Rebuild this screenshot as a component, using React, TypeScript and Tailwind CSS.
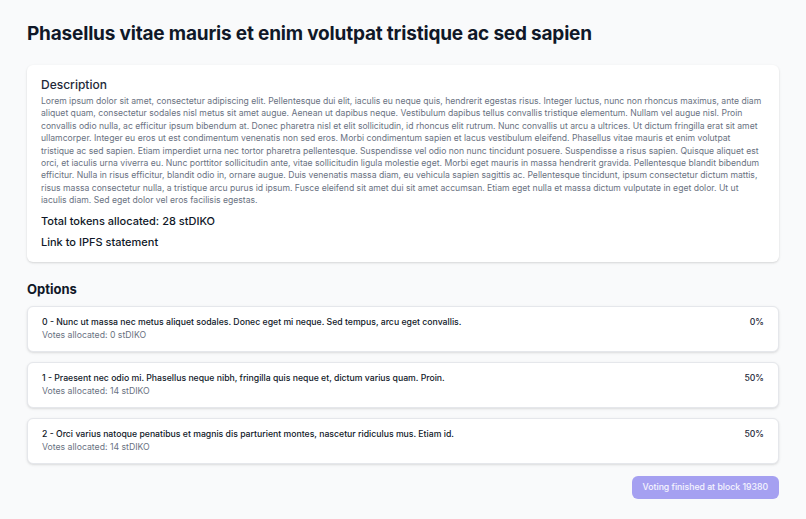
import React from "react";

// line breaks follow the original layout
const descriptionLines = [
  "Lorem ipsum dolor sit amet, consectetur adipiscing elit. Pellentesque dui elit, iaculis eu neque quis, hendrerit egestas risus. Integer luctus, nunc non rhoncus maximus, ante diam",
  "aliquet quam, consectetur sodales nisl metus sit amet augue. Aenean ut dapibus neque. Vestibulum dapibus tellus convallis tristique elementum. Nullam vel augue nisl. Proin",
  "convallis odio nulla, ac efficitur ipsum bibendum at. Donec pharetra nisl et elit sollicitudin, id rhoncus elit rutrum. Nunc convallis ut arcu a ultrices. Ut dictum fringilla erat sit amet",
  "ullamcorper. Integer eu eros ut est condimentum venenatis non sed eros. Morbi condimentum sapien et lacus vestibulum eleifend. Phasellus vitae mauris et enim volutpat",
  "tristique ac sed sapien. Etiam imperdiet urna nec tortor pharetra pellentesque. Suspendisse vel odio non nunc tincidunt posuere. Suspendisse a risus sapien. Quisque aliquet est",
  "orci, et iaculis urna viverra eu. Nunc porttitor sollicitudin ante, vitae sollicitudin ligula molestie eget. Morbi eget mauris in massa hendrerit gravida. Pellentesque blandit bibendum",
  "efficitur. Nulla in risus efficitur, blandit odio in, ornare augue. Duis venenatis massa diam, eu vehicula sapien sagittis ac. Pellentesque tincidunt, ipsum consectetur dictum mattis,",
  "risus massa consectetur nulla, a tristique arcu purus id ipsum. Fusce eleifend sit amet dui sit amet accumsan. Etiam eget nulla et massa dictum vulputate in eget dolor. Ut ut",
  "iaculis diam. Sed eget dolor vel eros facilisis egestas.",
];

const options = [
  {
    label: "0 - Nunc ut massa nec metus aliquet sodales. Donec eget mi neque. Sed tempus, arcu eget convallis.",
    votes: "0 stDIKO",
    pct: "0%",
  },
  {
    label: "1 - Praesent nec odio mi. Phasellus neque nibh, fringilla quis neque et, dictum varius quam. Proin.",
    votes: "14 stDIKO",
    pct: "50%",
  },
  {
    label: "2 - Orci varius natoque penatibus et magnis dis parturient montes, nascetur ridiculus mus. Etiam id.",
    votes: "14 stDIKO",
    pct: "50%",
  },
];

export default function App() {
  return (
    <div className="min-h-[519px] w-full bg-gray-50 px-[27px] pt-[22px] pb-5 font-['Inter',sans-serif] text-gray-900">
      <h1 className="text-[19px] font-bold leading-[24px] tracking-[-0.01em]">
        Phasellus vitae mauris et enim volutpat tristique ac sed sapien
      </h1>

      <div className="mt-[19px] rounded-md bg-white px-[14px] pt-[12px] pb-[13px] shadow-[0_1px_3px_rgba(0,0,0,0.1),0_1px_2px_rgba(0,0,0,0.06)]">
        <h2 className="text-[12px] font-medium leading-[16px] text-gray-800">Description</h2>
        <p className="mt-[2px] text-[8.62px] leading-[12.4px] text-gray-500">
          {descriptionLines.map((line, i) => (
            <span key={i} className="block whitespace-nowrap">
              {line}
            </span>
          ))}
        </p>
        <p className="mt-[7px] text-[11px] font-medium leading-[14px] text-gray-900">
          Total tokens allocated: 28 stDIKO
        </p>
        <p className="mt-[7px] text-[11px] font-medium leading-[14px] text-gray-900">Link to IPFS statement</p>
      </div>

      <h2 className="mt-[18px] text-[13px] font-bold leading-[18px]">Options</h2>

      <div className="mt-[8px] flex flex-col gap-[10px]">
        {options.map((o) => (
          <div
            key={o.label}
            className="flex items-start justify-between rounded-md border border-gray-200 bg-white px-[14px] pt-[9px] pb-[9px] shadow-sm"
          >
            <div>
              <div className="text-[8.7px] font-medium leading-[13px] text-gray-900">{o.label}</div>
              <div className="text-[8.7px] leading-[13px] text-gray-500">Votes allocated: {o.votes}</div>
            </div>
            <div className="text-[8.7px] font-medium leading-[13px] text-gray-800">{o.pct}</div>
          </div>
        ))}
      </div>

      <div className="mt-[12px] flex justify-end">
        <button className="rounded-md bg-[#a5a0f1] px-[11px] py-[5px] text-[8.7px] font-medium leading-[13px] text-white/90">
          Voting finished at block 19380
        </button>
      </div>
    </div>
  );
}
